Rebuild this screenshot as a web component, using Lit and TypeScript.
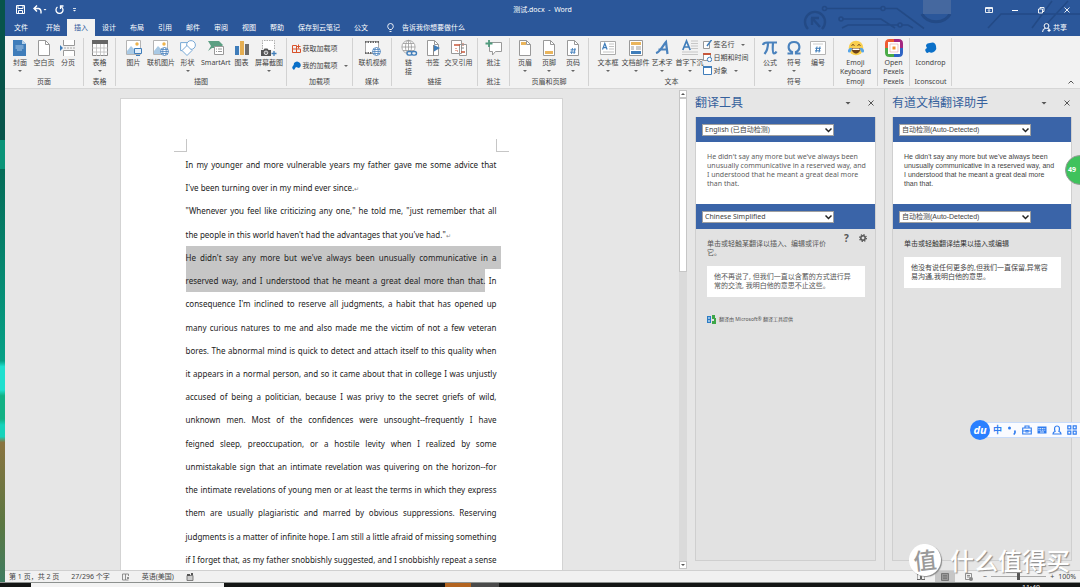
import { LitElement, html, css, svg, nothing, TemplateResult } from "lit";
import { customElement, property } from "lit/decorators.js";
import { classMap } from "lit/directives/class-map.js";

const sheet = svg`<path d="M2.500 .5h7l4 4v11h-11z" fill="#fff" stroke="#999"/><path d="M9.500 .5v4h4" fill="none" stroke="#999"/>`;
const globe = (x: number, y: number, r: number) => svg`<g fill="#fff" stroke="#4a82bd" stroke-width=".8" transform="translate(${x} ${y})"><circle r="${r}"/><ellipse rx="${r * 0.45}" ry="${r}"/><path d="M${-r} 0H${r}M${-r * 0.85} ${-r * 0.5}H${r * 0.85}M${-r * 0.85} ${r * 0.5}H${r * 0.85}" fill="none"/></g>`;
const picture = svg`<path d="M.5 .5h14v14H.5z" fill="#fff" stroke="#b4b4b4"/><circle cx="11" cy="4" r="1.700" fill="#eeb34b"/><path d="M1 11l4-5 4 4 2-1.500 3 3V14H1z" fill="#a9c9e4"/>`;

const ICONS: Record<string, unknown> = {
  cover: svg`<path d="M1 0h9l4 4v12H1z" fill="#3f7dba"/><path d="M10 0v4h4z" fill="#b8d2ea"/><path d="M3.500 6h8M3.500 8h8M5 10h5" stroke="#a8c8e6"/>`,
  blank: sheet,
  break: svg`<path d="M3.500 0v5.500h11V0M3.500 16v-5.500h11V16" fill="#fff" stroke="#999"/><path d="M4 8h12" stroke="#aaa" stroke-dasharray="2 1"/><path d="M0 5l3 3-3 3z" fill="#3f7dba"/>`,
  table: svg`<path d="M.5 .5h15v15H.5z" fill="#fff" stroke="#888"/><path d="M0 0h16v4H0z" fill="#666"/><path d="M0 8h16M0 12h16M4.500 4v12M8.500 4v12M12 4v12" stroke="#bbb" stroke-width=".8"/>`,
  image: svg`${picture}<path d="M8.500 8.500h7v5h-7z" fill="#e4eff9" stroke="#3f7dba"/><path d="M10 15.500h4" stroke="#3f7dba"/>`,
  webimage: svg`${picture}${globe(11.5, 11.5, 4)}`,
  shapes: svg`<path d="M.6 2.600h9v8h-9z" fill="#fff" stroke="#78a9d6"/><circle cx="11" cy="5" r="4.400" fill="#fff" stroke="#78a9d6"/><path d="M7 5.500l5 5-5 5-5-5z" fill="#fff" stroke="#78a9d6"/>`,
  smart: svg`<path d="M0 1h11l4 4-3 3H4L0 11l3-5z" fill="#5c9f83"/><path d="M6.500 6.500h9v8h-9z" fill="#fff" stroke="#999"/><path d="M8 9h1M10 9h4M8 11.500h1M10 11.500h4" stroke="#999"/>`,
  chart: svg`<path d="M1 6h4v9H1z" fill="#3f7dba"/><path d="M6 1h4v14H6z" fill="#e5ae51"/><path d="M11 4h4v11h-4z" fill="#6d6d6d"/>`,
  shot: svg`<path d="M1.500 9V.5h12V10" fill="#fff" stroke="#aaa" stroke-dasharray="1.500 1"/><path d="M0 10h2.500l1-1.500h3l1 1.500H10v6H0z" fill="#555"/><circle cx="5" cy="12.800" r="1.800" fill="#777" stroke="#fff" stroke-width=".8"/><path d="M13 11v5M10.500 13.500h5" stroke="#3f7dba" stroke-width="1.300"/>`,
  video: svg`<path d="M.5 1.500h13v12H.5z" fill="#fff" stroke="#aaa"/><path d="M0 2h14M0 13h9" stroke="#666" stroke-width="2" stroke-dasharray="1.500 1"/>${globe(11.5, 11.5, 4)}`,
  link: svg`<g fill="#fff" stroke="#999" stroke-width=".8"><circle cx="7.500" cy="7" r="6.600"/><ellipse cx="7.500" cy="7" rx="3" ry="6.600"/><path d="M1 7h13M2 3.500h11M2 10.500h11M7.500 0v14"/></g><g fill="#f2f2f2" stroke="#3f7dba" stroke-width="1.400"><rect x="6" y="11.500" width="5" height="3.600" rx="1.800"/><rect x="10.500" y="11.500" width="5" height="3.600" rx="1.800"/></g>`,
  mark: svg`${sheet}<path d="M8.500 5v11" stroke="#888"/><path d="M9 5l6 3-6 3.500z" fill="#3f7dba"/>`,
  cross: svg`<path d="M.5 .5h10v13H.5zM8.500 4.500h7v11h-7z" fill="#fff" stroke="#999"/><path d="M3 5h6M10 12h4" stroke="#c8583b" stroke-width="1.500"/><path d="M5 8v3h3M12 3v3" stroke="#c8583b" fill="none" stroke-dasharray="1 1"/><path d="M10 8h3" stroke="#888"/>`,
  comment: svg`<path d="M3.500 2.500h12v9h-6l-3 3.500v-3.500h-3z" fill="#fff" stroke="#999"/><path d="M3 0v7M-.5 3.500h7" stroke="#4f9a7c" stroke-width="1.800"/>`,
  header: svg`${sheet}<path d="M4 2h5v3H4z" fill="#eab55c"/>`,
  footer: svg`${sheet}<path d="M4 11h8v3H4z" fill="#eab55c"/>`,
  pageno: svg`${sheet}<path d="M7.500 8l-1 6M10 8l-1 6M5.500 9.800h5.500M5 12.200h5.500" stroke="#3f7dba" fill="none" stroke-width=".9"/>`,
  textbox: svg`<path d="M.5 1.500h15v13H.5z" fill="#fff" stroke="#aaa"/><path d="M2.500 9.500l2.300-6 2.300 6M3.300 7.600h3" stroke="#3f7dba" fill="none" stroke-width="1.200"/><path d="M9 4h5M9 6.500h5M9 9h5M3 12h11" stroke="#b4b4b4" stroke-width=".8"/>`,
  parts: svg`<path d="M1.500 .5h13v15h-13z" fill="#fff" stroke="#999"/><path d="M3 2h10v3H3z" fill="#eab55c"/><path d="M3 7h3M3 9h3M8 7h5M8 9h5" stroke="#999"/><path d="M3 11h10v3H3z" fill="#3f7dba"/>`,
  art: svg`<path d="M2 13C6 12 8.500 6 12 2l1.500 12M4.500 9.500h9" stroke="#4a82bd" stroke-width="2.200" fill="none"/>`,
  drop: svg`<path d="M9 1h7M9 3.500h7M9 6h7M9 8.500h7M0 12h16M0 14.500h16" stroke="#bbb" stroke-width=".8"/><path d="M.8 10L4.500 1l3.700 9M2.200 7h4.600" stroke="#3f7dba" fill="none" stroke-width="1.700"/>`,
  pi: svg`<path d="M1 5C1.500 2.500 3 2.500 5 2.500h10M6 3c0 5-1 8-3.500 11M11 3c-.5 6-.5 10 1 10.500 1.500 0 2-1 2.500-2" stroke="#4a82bd" stroke-width="2.200" fill="none"/>`,
  omega: svg`<path d="M1.500 13.500H6V12C1 9.500 1.500 2 8 2s7 7.500 2 10v1.500h4.500" stroke="#4a82bd" stroke-width="2.200" fill="none"/>`,
  number: svg`<path d="M.5 1.500h15v13H.5z" fill="#fff" stroke="#b4b4b4"/><path d="M3 4h10" stroke="#ccc"/><path d="M7 6.500l-1 6M10 6.500l-1 6M5.300 8.300h5.500M5 10.800h5.500" stroke="#3f7dba" fill="none"/>`,
  emoji: svg`<circle cx="8" cy="8" r="7.300" fill="#f9cf4e"/><path d="M3.500 8h9c0 3-2 5.500-4.500 5.500S3.500 11 3.500 8z" fill="#6b4118"/><path d="M4.500 8.500h7v1.500h-7z" fill="#fff"/><path d="M3.500 5.500q1.500-2 3 0M9.500 5.500q1.500-2 3 0" stroke="#6b4118" fill="none"/><path d="M0 10q2-3 4-2-.5 4-2.500 4.500T0 10zM16 10q-2-3-4-2 .5 4 2.500 4.500T16 10z" fill="#58a6e8"/>`,
  pexels: svg`<g fill="none" stroke-width="3"><path d="M.5 8V3.500q0-3 3-3H8" stroke="#ee5a30"/><path d="M8 .5h4.500q3 0 3 3V8" stroke="#a3267f"/><path d="M15.500 8v4.500q0 3-3 3H8" stroke="#2f64c4"/><path d="M8 15.500H3.500q-3 0-3-3V8" stroke="#4bab48"/></g><path d="M2 2h12v12H2z" fill="#fff"/><path d="M4 4h8v8H4z" fill="none" stroke="#e6a3a3" stroke-width=".6"/><path d="M6.500 6.500h3v3h-3z" fill="#f1912f"/>`,
  drop2: svg`<path d="M3 5q1-2 4-2 5-2 6 3 1 3-1 5-3 3-6 1-2 2-3 0Q1 9 4 8 3 7 3 5z" fill="#0b70c8"/>`,
};

interface Tool { icon: string; label: string; caret?: boolean; wide?: boolean }
interface Group { name: string; size: string; tools: Tool[] }

const GROUPS: Group[] = [
  { name: "页面", size: "slim", tools: [{ icon: "cover", label: "封面", caret: true }, { icon: "blank", label: "空白页" }, { icon: "break", label: "分页" }] },
  { name: "表格", size: "slim", tools: [{ icon: "table", label: "表格", caret: true }] },
  { name: "插图", size: "roomy", tools: [{ icon: "image", label: "图片" }, { icon: "webimage", label: "联机图片" }, { icon: "shapes", label: "形状", caret: true }, { icon: "smart", label: "SmartArt" }, { icon: "chart", label: "图表" }, { icon: "shot", label: "屏幕截图", caret: true }] },
  { name: "加载项", size: "addins", tools: [] },
  { name: "媒体", size: "roomy", tools: [{ icon: "video", label: "联机视频" }] },
  { name: "链接", size: "slim", tools: [{ icon: "link", label: "链\n接" }, { icon: "mark", label: "书签" }, { icon: "cross", label: "交叉引用", wide: true }] },
  { name: "批注", size: "slim", tools: [{ icon: "comment", label: "批注" }] },
  { name: "页眉和页脚", size: "slim", tools: [{ icon: "header", label: "页眉", caret: true }, { icon: "footer", label: "页脚", caret: true }, { icon: "pageno", label: "页码", caret: true }] },
  { name: "文本", size: "text", tools: [{ icon: "textbox", label: "文本框", caret: true }, { icon: "parts", label: "文档部件", caret: true }, { icon: "art", label: "艺术字", caret: true }, { icon: "drop", label: "首字下沉", caret: true }] },
  { name: "符号", size: "slim", tools: [{ icon: "pi", label: "公式", caret: true }, { icon: "omega", label: "符号", caret: true }, { icon: "number", label: "编号" }] },
  { name: "Emoji", size: "roomy", tools: [{ icon: "emoji", label: "Emoji\nKeyboard", wide: true }] },
  { name: "Pexels", size: "slim", tools: [{ icon: "pexels", label: "Open\nPexels" }] },
  { name: "Iconscout", size: "roomy", tools: [{ icon: "drop2", label: "Icondrop", wide: true }] },
];

const caret = html`<svg class="caret" viewBox="0 0 4 2" aria-hidden="true"><path d="M0 0h4L2 2z" fill="#666"/></svg>`;

@customElement("word-ribbon")
class WordRibbon extends LitElement {
  static styles = css`
    :host { display: grid; grid-template-columns: 79px 32px 171px 66px 39px 86px 32px 79px 166px 79px 44px 32px 42px 1fr; height: 52px; background: #f2f2f2; color: #444; font-size: 7px; line-height: 9px; }
    .group { display: flex; flex-direction: column; margin: 2px 0; border-right: 1px solid #d2d2d2; min-width: 0; }
    .tools { flex: 1; display: flex; justify-content: center; }
    .name { text-align: center; line-height: 9px; white-space: nowrap; }
    button { font: inherit; color: inherit; background: none; border: 0; padding: 0; margin: 0; }
    .tool { display: grid; grid-template-rows: 16px 11px 5px; align-content: start; justify-items: center; padding-top: 2px; width: 24px; flex: none; }
    .roomy .tool, .text .tool { width: 27px; }
    .slim .tool.wide { width: 28px; }
    .roomy .tool.wide { width: 40px; }
    .icon { width: 16px; height: 16px; overflow: visible; }
    .label { white-space: pre; padding-top: 2px; text-align: center; }
    .caret { width: 4px; height: 2px; align-self: end; }
    .rows { display: flex; flex-direction: column; align-items: start; }
    .row { display: flex; align-items: center; gap: 2px; white-space: nowrap; height: 13px; }
    .row .caret { align-self: center; margin-left: 4px; }
    .row svg.mini { width: 9px; height: 9px; }
    .addins .row { height: 17px; }
    .addins .rows { padding-top: 2px; }
    .end { display: flex; align-items: end; justify-content: end; padding: 0 6px 2px 0; }
    .end svg { width: 6px; height: 4px; }
  `;

  private row(icon: unknown, label: string, menu = false) {
    return html`<button class="row"><svg class="mini" viewBox="0 0 9 9" aria-hidden="true">${icon}</svg>${label}${menu ? caret : nothing}</button>`;
  }

  private extras(size: string) {
    if (size === "addins")
      return html`<div class="rows">
        ${this.row(svg`<path d="M.5 1.500h4v7h-4zM.5 5h8v3.500h-8M6.500 .5v4M4.500 2.500h4" fill="none" stroke="#d8532c"/>`, "获取加载项")}
        ${this.row(svg`<path d="M2 2q3-3 6 0 2 3-1 5L4 6 2 9Q-1 7 1 5 2 4 2 2z" fill="#0b70c8"/>`, "我的加载项", true)}
      </div>`;
    if (size === "text")
      return html`<div class="rows">
        ${this.row(svg`<path d="M.5 1.500h6v7h-6z" fill="#fff" stroke="#999"/><path d="M8.500 0L4 6" stroke="#3f7dba" stroke-width="1.500"/>`, "签名行", true)}
        ${this.row(svg`<path d="M.5 .5h7v7h-7z" fill="#fff" stroke="#999"/><path d="M0 1h8" stroke="#c8583b" stroke-width="2"/><circle cx="6.500" cy="6.500" r="2.200" fill="#fff" stroke="#3f7dba"/>`, "日期和时间")}
        ${this.row(svg`<path d="M.5 .5h8v8h-8z" fill="#fff" stroke="#3f7dba"/><path d="M0 1h9" stroke="#3f7dba" stroke-width="2"/>`, "对象", true)}
      </div>`;
    return nothing;
  }

  render() {
    return html`${GROUPS.map(g => html`
      <section class="group ${g.size}">
        <div class="tools">
          ${g.tools.map(t => html`<button class=${classMap({ tool: true, wide: !!t.wide })}>
            <svg class="icon" viewBox="0 0 16 16" aria-hidden="true">${ICONS[t.icon]}</svg>
            <span class="label">${t.label}</span>${t.caret ? caret : nothing}
          </button>`)}
          ${this.extras(g.size)}
        </div>
        <div class="name">${g.name}</div>
      </section>`)}
      <div class="end"><button aria-label="折叠功能区"><svg viewBox="0 0 6 4"><path d="M.5 3.500L3 1l2.500 2.500" fill="none" stroke="#555"/></svg></button></div>`;
  }
}

@customElement("translate-pane")
class TranslatePane extends LitElement {
  @property() heading = "";
  @property() from = "";
  @property() to = "";
  @property() hint = "";
  @property() result = "";
  @property({ type: Boolean, reflect: true }) youdao = false;

  static styles = css`
    :host { display: flex; flex-direction: column; min-width: 0; padding: 0 8px 9px 7px; color: #555; font-size: 7px; line-height: 9px; }
    header { display: flex; align-items: center; height: 28px; gap: 17px; padding-right: 2px; }
    h2 { flex: 1; margin: 0; font-size: 12px; line-height: 16px; font-weight: 400; color: #35609c; white-space: nowrap; }
    button { border: 0; background: none; padding: 0; display: flex; color: #555; }
    header svg { width: 6px; height: 6px; }
    .box { flex: 1; border: 1px solid #cfcfcf; border-top: 0; background: #e2e2e2; display: flex; flex-direction: column; }
    .bar { height: 25px; background: #3a64a8; display: flex; align-items: center; padding-left: 6px; }
    .pick { position: relative; width: 132px; }
    select { appearance: none; display: block; width: 100%; height: 12px; border: 1px solid #a0a0a0; border-radius: 0; background: #fff; color: #444; font: inherit; line-height: 9px; padding: 0 2px; margin: 0; }
    .pick svg { position: absolute; right: 2px; top: 3px; width: 7px; height: 6px; pointer-events: none; }
    .source { height: 52px; box-sizing: border-box; background: #fff; padding: 10px 8px 0 11px; color: #606060; }
    .source, .source + .bar { margin-bottom: 0; }
    .bar + .source { min-height: 62px; }
    .source p { margin: 0; white-space: pre-line; }
    .hint { display: flex; padding: 10px 8px 0 11px; gap: 10px; }
    .hint p { margin: 0; width: 127px; }
    .hint svg { width: 8px; height: 8px; }
    .hint .tools { display: flex; gap: 10px; margin-top: -5px; height: 8px; font-size: 10px; font-weight: 700; }
    .hint button { font: inherit; }
    .card { margin: 9px 10px 0 11px; background: #fff; padding: 6px 7px 7px; min-height: 18px; white-space: pre; overflow: hidden; }
    .by { display: flex; align-items: center; gap: 3px; margin: 18px 0 0 11px; font-size: 5px; white-space: nowrap; }
    .by svg { width: 9px; height: 9px; }
    :host([youdao]) .source, :host([youdao]) select { font-family: "Liberation Sans", "Noto Sans CJK SC", sans-serif; color: #444; }
    :host([youdao]) .hint { color: #333; }
    :host([youdao]) .card { color: #444; }
  `;

  private picker(label: string, value: string) {
    return html`<div class="bar"><div class="pick"><select aria-label=${label}><option>${value}</option></select>
      <svg viewBox="0 0 7 6" aria-hidden="true"><path d="M.5 1.500l3 3 3-3" fill="none" stroke="#222" stroke-width="1.500"/></svg></div></div>`;
  }

  render() {
    return html`
      <header><h2>${this.heading}</h2>
        <button aria-label="选项"><svg viewBox="0 0 6 6"><path d="M.5 2h5L3 4.500z" fill="#555"/></svg></button>
        <button aria-label="关闭"><svg viewBox="0 0 6 6"><path d="M.5 .5l5 5M5.500 .5l-5 5" stroke="#555"/></svg></button>
      </header>
      <div class="box">
        ${this.picker("源语言", this.from)}
        <div class="source"><p>He didn't say any more but we've always been
unusually communicative in a reserved way, and
I understood that he meant a great deal more
than that.</p></div>
        ${this.picker("目标语言", this.to)}
        <div class="hint"><p>${this.hint}</p>
          ${this.youdao ? nothing : html`<div class="tools"><button aria-label="帮助">?</button>
            <button aria-label="设置"><svg viewBox="0 0 8 8"><circle cx="4" cy="4" r="2.200" fill="none" stroke="#555" stroke-width="1.500"/><circle cx="4" cy="4" r="3.400" fill="none" stroke="#555" stroke-width="1.200" stroke-dasharray="1.300 1.370"/></svg></button></div>`}
        </div>
        <div class="card">${this.result}</div>
        ${this.youdao ? nothing : html`<div class="by"><svg viewBox="0 0 9 9" aria-hidden="true"><path d="M0 1h4v7H0z" fill="#2b7cc4"/><path d="M1 3h2M1 6h2" stroke="#fff"/><path d="M5 0h3v3h1v6H5V6h2V4H5z" fill="#3da648"/></svg>翻译由 Microsoft® 翻译工具提供</div>`}
      </div>`;
  }
}

const TABS = ["开始", "插入", "设计", "布局", "引用", "邮件", "审阅", "视图", "帮助", "保存到云笔记", "公文"];

const mark = html`<span class="mark">↵</span>`;
const LINES: { text: TemplateResult | string; end?: boolean; sel?: boolean }[] = [
  { text: "In my younger and more vulnerable years my father gave me some advice that" },
  { text: html`I've been turning over in my mind ever since.${mark}`, end: true },
  { text: "\"Whenever you feel like criticizing any one,\" he told me, \"just remember that all" },
  { text: html`the people in this world haven't had the advantages that you've had."${mark}`, end: true },
  { text: "He didn't say any more but we've always been unusually communicative in a", sel: true },
  { text: html`<span class="picked">reserved way, and I understood that he meant a great deal more than that.</span> In` },
  { text: "consequence I'm inclined to reserve all judgments, a habit that has opened up" },
  { text: "many curious natures to me and also made me the victim of not a few veteran" },
  { text: "bores. The abnormal mind is quick to detect and attach itself to this quality when" },
  { text: "it appears in a normal person, and so it came about that in college I was unjustly" },
  { text: "accused of being a politician, because I was privy to the secret griefs of wild," },
  { text: "unknown men. Most of the confidences were unsought--frequently I have" },
  { text: "feigned sleep, preoccupation, or a hostile levity when I realized by some" },
  { text: "unmistakable sign that an intimate revelation was quivering on the horizon--for" },
  { text: "the intimate revelations of young men or at least the terms in which they express" },
  { text: "them are usually plagiaristic and marred by obvious suppressions. Reserving" },
  { text: "judgments is a matter of infinite hope. I am still a little afraid of missing something" },
  { text: "if I forget that, as my father snobbishly suggested, and I snobbishly repeat a sense" },
];

@customElement("app-root")
class AppRoot extends LitElement {
  static styles = css`
    :host { display: grid; grid-template-columns: 5px 1fr; grid-template-rows: 1fr 5px; height: 100vh; overflow: hidden; position: relative; font-family: "Noto Sans", "Noto Sans CJK SC", sans-serif; font-size: 7px; line-height: 9px; color: #444; }
    .desk { background: linear-gradient(#07544a 0 24%, #0a9478 24% 29%, #046b57 29%, #06a186 62%, #1fe0cf 63% 67%, #12b184 68% 72%, #16d3bb 73% 75%, #8a7440 76%, #5b7742 90%, #3f7d62); }
    .win { display: flex; flex-direction: column; min-width: 0; min-height: 0; background: #e6e6e6; }
    button { font: inherit; color: inherit; background: none; border: 0; padding: 0; margin: 0; }
    .top { position: relative; background: #2b579a; color: #fff; display: grid; grid-template-rows: 19px 17px; height: 36px; }
    .circuit { position: absolute; right: 0; top: 0; width: 280px; height: 36px; }
    .title { display: grid; grid-template-columns: 1fr auto 1fr; align-items: center; position: relative; line-height: 18px; }
    .quick { display: flex; gap: 8px; padding-left: 11px; align-items: center; }
    .quick button, .controls button { display: flex; }
    .quick svg { height: 9px; width: auto; }
    .controls { display: flex; justify-content: end; gap: 18px; padding-right: 9px; align-items: center; }
    .controls svg { width: 8px; height: 8px; }
    .tabs { display: flex; position: relative; line-height: 17px; white-space: nowrap; }
    .tab { padding: 0 7px; }
    .tab.file { padding: 0 11px 0 9px; }
    .tab.on { background: #f2f2f2; color: #2b579a; }
    .tell { display: flex; align-items: center; gap: 8px; padding: 0 12px; }
    .tell svg { width: 7px; height: 9px; }
    .share { margin-left: auto; padding-right: 13px; display: flex; align-items: center; gap: 2px; }
    .share svg { width: 9px; height: 9px; }
    .work { flex: 1; min-height: 0; display: grid; grid-template-columns: 1fr 9px 196px 196px; grid-template-rows: minmax(0, 1fr); border-top: 1px solid #d6d6d6; }
    .canvas { display: flex; justify-content: center; padding: 9px 2px 0 0; min-height: 0; }
    .page { width: 443px; box-sizing: border-box; background: #fff; border: 1px solid #d3d3d3; border-bottom: 0; display: flex; flex-direction: column; padding: 40px 0 0; overflow: hidden; }
    .corners { display: flex; justify-content: space-between; padding: 0 53px; }
    .corner { width: 12px; height: 12px; border: solid #c6c6c6; border-width: 0 1px 1px 0; }
    .corner.right { border-width: 0 0 1px 1px; }
    .body { flex: 1; min-height: 0; display: grid; grid-auto-rows: minmax(0, 1fr); margin: 1px 65px -1px; font: 8px/23px "Noto Sans", sans-serif; color: #222; }
    .line { text-align: justify; text-align-last: justify; white-space: nowrap; }
    .line.end { text-align-last: left; }
    .line.sel { background: #c6c6c6; margin-right: -4px; padding-right: 4px; }
    .picked { background: #c6c6c6; padding: 6px 0; }
    .mark { font-size: 6px; line-height: 1px; color: #888; }
    .scroll { display: flex; flex-direction: column; background: #dadada; margin: 1px 1px 1px 0; }
    .scroll button { height: 8px; background: #fff; border: 1px solid #c6c6c6; display: grid; place-items: center; box-sizing: border-box; }
    .scroll svg { width: 4px; height: 2px; }
    .thumb { height: 174px; background: #fff; border: 1px solid #c6c6c6; box-sizing: border-box; }
    .space { flex: 1; }
    .pane + .pane { border-left: 1px solid #cfcfcf; }
    .status { display: flex; align-items: center; height: 12px; background: #f1f1f1; border-top: 1px solid #d0d0d0; padding: 0 4px; gap: 12px; box-sizing: border-box; white-space: nowrap; }
    .status svg { width: 8px; height: 8px; }
    .views { margin-left: auto; display: flex; align-items: center; gap: 4px; }
    .view { width: 20px; height: 11px; display: grid; place-items: center; }
    .view.on { background: #c6c6c6; }
    input[type="range"] { appearance: none; width: 55px; height: 9px; margin: 0; background: linear-gradient(#aaa, #aaa) center / 100% 1px no-repeat; }
    input[type="range"]::-webkit-slider-thumb { appearance: none; width: 3px; height: 7px; background: #555; }
    .taskbar { grid-column: 1 / -1; background: #141615; display: grid; grid-template-columns: 31px 193px 221px 26px 28px 1fr; overflow: hidden; border-top: 1px solid #8d918f; box-sizing: border-box; }
    .search { background: #f3f3f3; }
    .app { background: #b3641f; }
    .app.idle { background: #4a4a4a; }
    .clock { justify-self: end; color: #eee; padding-right: 40px; line-height: 9px; }
    .ball { position: absolute; right: -15px; top: 155px; width: 30px; height: 30px; border-radius: 50%; background: #3fc25c; border: 1px solid #9a9a9a; box-sizing: border-box; color: #fff; line-height: 28px; font-weight: 700; padding-left: 2px; text-align: left; }
    .ime { position: absolute; right: 0; top: 420px; display: flex; align-items: center; color: #2f7cf0; }
    .du { width: 20px; height: 20px; border-radius: 50%; background: #2a80ff; color: #fff; font: italic 700 11px/19px "Noto Sans", sans-serif; text-align: center; z-index: 1; }
    .keys { display: flex; align-items: center; gap: 5px; height: 16px; box-sizing: border-box; padding: 0 3px 0 11px; margin-left: -10px; background: #fafbff; border: 1px solid #c9dcfa; border-right: 0; }
    .keys svg { width: 10px; height: 10px; }
    .keys b { font-size: 9px; width: 10px; line-height: 12px; text-align: right; }
    .stamp { position: absolute; right: 10px; top: 544px; display: flex; align-items: center; gap: 9px; font: 500 24px/32px "Noto Sans CJK SC", sans-serif; color: #fff; text-shadow: 1px 1px 1px #8a8a8a; white-space: nowrap; }
    .seal { width: 32px; height: 32px; border-radius: 50%; background: #fff; color: #9a9a9a; text-shadow: none; text-align: center; font-size: 23px; line-height: 31px; box-shadow: 1px 1px 1px #8a8a8a; transform: rotate(-6deg); }
  `;

  render() {
    return html`
      <div class="desk"></div>
      <div class="win">
        <div class="top">
          <svg class="circuit" viewBox="0 0 280 36" aria-hidden="true">
            <g fill="none" stroke="#234a86" stroke-width="1.600">
              <circle cx="24.500" cy="8.500" r="2"/><path d="M27 8.500h54M85 8.500h12l27 20M43 19h38l14 9M42 28l6-3h50M102 25h6l5 3M188 28l13-14h79M232 28l20-27M243 28l25-27"/>
              <circle cx="83" cy="8.500" r="2"/><circle cx="41" cy="19" r="2"/><circle cx="100" cy="25" r="2"/>
            </g>
            <g fill="none" stroke="#234a86" stroke-width="2.400">
              <path d="M28 29a10 10 0 1 1 14 0" transform="translate(-20)"/><path d="M11 18h8M12 18v7M12 18l8 9"/>
              <path d="M122 14a15 12 0 0 0 28 0" stroke-width="3"/>
            </g>
            <path d="M123 0h28v14h-28z" fill="#45689f"/>
          </svg>
          <div class="title">
            <div class="quick">
              <button aria-label="保存"><svg viewBox="0 0 9 9"><path d="M.5 .5h8v8h-8zM2 .5v3h5v-3M2.500 8.500v-3h4v3" fill="none" stroke="#fff"/></svg></button>
              <button aria-label="撤消"><svg viewBox="0 0 14 9"><path d="M4 .5L1 3.500l3 3M1 3.500h4.500q3 .5 2.500 5" fill="none" stroke="#fff" stroke-width="1.400"/><path d="M10.500 4h3L12 5.500z" fill="#fff"/></svg></button>
              <button aria-label="重复"><svg viewBox="0 0 9 9"><path d="M2.500 2a3.500 3.500 0 1 0 4 0M8.500 1H5.500v3" fill="none" stroke="#fff" stroke-width="1.300"/></svg></button>
              <button aria-label="自定义"><svg viewBox="0 0 5 9"><path d="M1 3.500h3" stroke="#fff" stroke-width=".8"/><path d="M1 5h3L2.500 6.500z" fill="#fff"/></svg></button>
            </div>
            <div>测试.docx&nbsp; -&nbsp; Word</div>
            <div class="controls">
              <button aria-label="功能区显示选项"><svg viewBox="0 0 8 8"><path d="M.5 1.500h7v5h-7zM.5 2.500h7M4 6V4M3 4.500l1-1 1 1" fill="none" stroke="#fff" stroke-width=".9"/></svg></button>
              <button aria-label="最小化"><svg viewBox="0 0 8 8"><path d="M1 4.500h6" stroke="#fff"/></svg></button>
              <button aria-label="还原"><svg viewBox="0 0 8 8"><path d="M1.500 3h4v4h-4zM3 3V1.500h4v4H5.500" fill="none" stroke="#fff" stroke-width=".9"/></svg></button>
              <button aria-label="关闭"><svg viewBox="0 0 8 8"><path d="M1.500 1.500l5 5M6.500 1.500l-5 5" stroke="#fff" stroke-width=".9"/></svg></button>
            </div>
          </div>
          <div class="tabs">
            <button class="tab file">文件</button>
            ${TABS.map(t => html`<button class=${classMap({ tab: true, on: t === "插入" })}>${t}</button>`)}
            <button class="tell"><svg viewBox="0 0 7 9"><path d="M2.500 6.500Q.7 5 .7 3.300a2.800 2.800 0 0 1 5.600 0Q6.300 5 4.500 6.500zM2.500 8.500h2" fill="none" stroke="#fff" stroke-width=".9"/></svg>告诉我你想要做什么</button>
            <button class="share"><svg viewBox="0 0 9 9"><circle cx="4.500" cy="3" r="2.400" fill="none" stroke="#fff"/><path d="M.6 9q0-3.500 3-3.700M5.500 5.500Q8 6 8.400 7M5.500 7.500h3M7 6v3" fill="none" stroke="#fff"/></svg>共享</button>
          </div>
        </div>
        <word-ribbon></word-ribbon>
        <div class="work">
          <div class="canvas">
            <article class="page">
              <div class="corners"><span class="corner"></span><span class="corner right"></span></div>
              <div class="body">${LINES.map(l => html`<div class=${classMap({ line: true, end: !!l.end, sel: !!l.sel })}>${l.text}</div>`)}</div>
            </article>
          </div>
          <div class="scroll">
            <button aria-label="向上"><svg viewBox="0 0 4 2"><path d="M0 2h4L2 0z" fill="#555"/></svg></button>
            <div class="thumb"></div><div class="space"></div>
            <button aria-label="向下"><svg viewBox="0 0 4 2"><path d="M0 0h4L2 2z" fill="#555"/></svg></button>
          </div>
          <translate-pane class="pane" heading="翻译工具" from="English (已自动检测)" to="Chinese Simplified"
            hint="单击或轻触某翻译以插入、编辑或评价它。"
            result=${"他不再说了, 但我们一直以含蓄的方式进行异\n常的交流, 我明白他的意思不止这些。"}></translate-pane>
          <translate-pane class="pane" youdao heading="有道文档翻译助手" from="自动检测(Auto-Detected)" to="自动检测(Auto-Detected)"
            hint="单击或轻触翻译结果以插入或编辑"
            result=${"他没有说任何更多的,但我们一直保留,异常容\n易沟通,我明白他的意思。"}></translate-pane>
        </div>
        <div class="status">
          <span>第 1 页，共 2 页</span><span>27/296 个字</span>
          <svg viewBox="0 0 8 8" aria-hidden="true"><path d="M.5 1h3v6h-3zM3.500 1h3v2M3.500 7h3M5 4l2 2M7 4L5 6" fill="none" stroke="#777" stroke-width=".8"/></svg>
          <span>英语(美国)</span>
          <svg viewBox="0 0 8 8" aria-hidden="true"><path d="M1 2.500h6v5H1z" fill="#ccc" stroke="#666" stroke-width=".8"/><path d="M1 1h3v2H1zM5 0h2v2H5z" fill="#555"/></svg>
          <div class="views">
            <button class="view" aria-label="阅读视图"><svg viewBox="0 0 8 8"><path d="M0 1.500h3.500v5H0zM4.500 1.500H8v5H4.500z" fill="none" stroke="#666"/></svg></button>
            <button class="view on" aria-label="页面视图"><svg viewBox="0 0 8 8"><path d="M.5 .5h7v7h-7z" fill="#999" stroke="#777"/><path d="M2 2.500h4M2 4h4M2 5.500h4" stroke="#666" stroke-width=".6"/></svg></button>
            <button class="view" aria-label="Web 版式视图"><svg viewBox="0 0 8 8"><path d="M.5 .5h6v6h-6zM2 2.500h3M2 4h3" fill="none" stroke="#777" stroke-width=".8"/><circle cx="6" cy="6" r="2" fill="#888"/></svg></button>
            <button aria-label="缩小">−</button><input type="range" aria-label="缩放" value="50"><button aria-label="放大">+</button>
            <span>100%</span>
          </div>
        </div>
      </div>
      <div class="taskbar"><i></i><i class="search"></i><i></i><i class="app"></i><i class="app idle"></i><span class="clock">11:40</span></div>
      <div class="ball">49</div>
      <div class="ime"><span class="du">du</span><div class="keys"><b>中</b>
        <svg viewBox="0 0 10 10"><circle cx="2.500" cy="3" r="1.500" fill="#2f7cf0"/><path d="M7.500 5.500q1.500 2-.8 4" stroke="#2f7cf0" stroke-width="1.600" fill="none"/></svg>
        <svg viewBox="0 0 10 10"><path d="M.7 3h8.600v6H.7zM3 3V1h4v2M.7 6h3M6.300 6h3M4 5.500h2v1.500H4z" fill="none" stroke="#2f7cf0" stroke-width="1.100"/></svg>
        <svg viewBox="0 0 10 10"><path d="M.5 1.500h9v7h-9z" fill="#2f7cf0"/><path d="M1.500 3.500h7M1.500 5.200h7" stroke="#fff" stroke-width=".9" stroke-dasharray="1 .7"/><path d="M3 7h4" stroke="#fff" stroke-width=".8"/></svg>
        <svg viewBox="0 0 10 10"><path d="M3 6.500Q1.500 1 5 1t2 5.500Q9 7 9 9H1q0-2 2-2.500z" fill="none" stroke="#2f7cf0" stroke-width="1.200"/></svg>
        <svg viewBox="0 0 10 10"><path d="M.8 .8h3v3h-3zM6.200 .8h3v3h-3zM.8 6.200h3v3h-3zM6.200 6.200h3v3h-3z" fill="none" stroke="#2f7cf0" stroke-width="1.200"/></svg>
      </div></div>
      <div class="stamp"><span class="seal">值</span><span>什么值得买</span></div>`;
  }
}
